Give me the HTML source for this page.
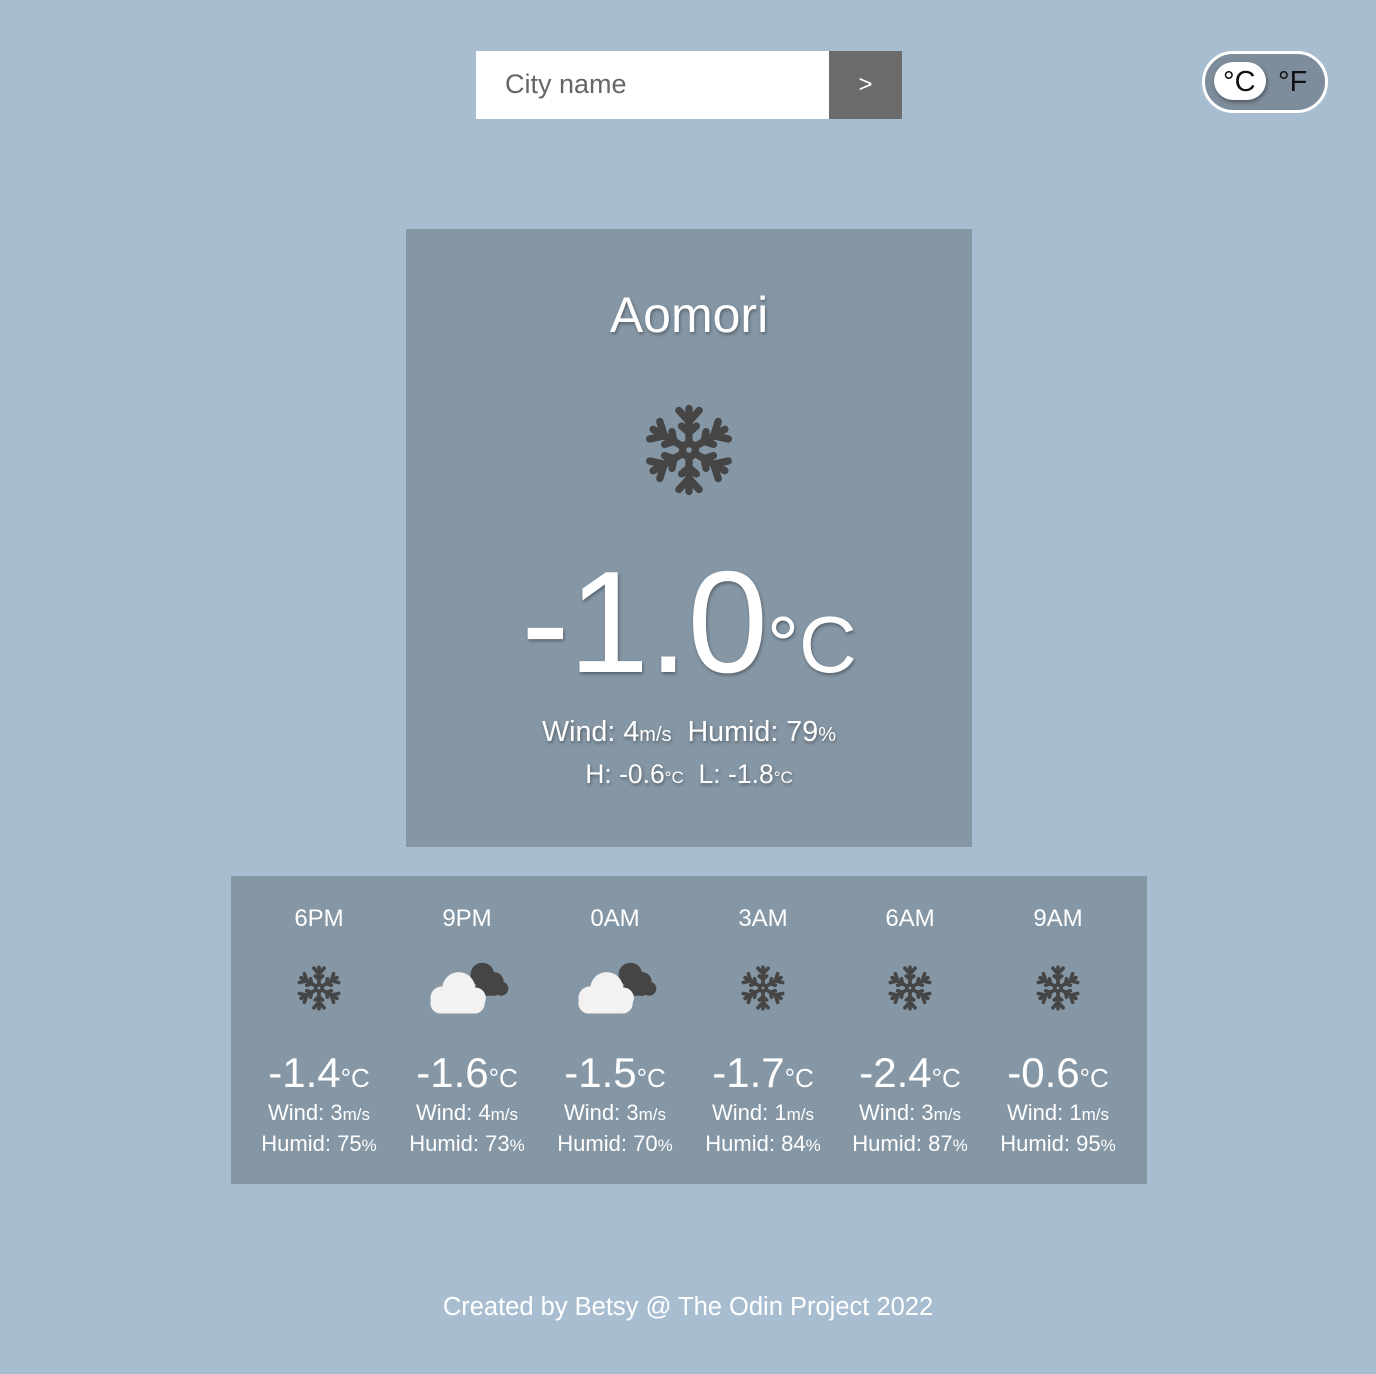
<!DOCTYPE html>
<html><head><meta charset="utf-8"><style>
body{margin:0;width:1376px;height:1374px;background:#a8bed0;font-family:"Liberation Sans",Arial,sans-serif;position:relative;overflow:hidden}
.a{position:absolute}
.sh{text-shadow:1px 2px 3px rgba(0,0,0,.35)}
.w{color:#fff}
.col{position:absolute;width:148px;text-align:center;color:#fff}
</style></head><body>
<svg width="0" height="0" style="position:absolute"><defs>
<g id="arm"><line x1="0" y1="-10" x2="0" y2="-45"/><polyline points="-11,-43 0,-31 11,-43" fill="none"/><polyline points="-8,-26 0,-19 8,-26" fill="none"/></g>
<g id="snow" stroke="#454545" stroke-width="8" stroke-linecap="round" stroke-linejoin="round" fill="none">
<circle r="7"/>
<use href="#arm"/><use href="#arm" transform="rotate(60)"/><use href="#arm" transform="rotate(120)"/><use href="#arm" transform="rotate(180)"/><use href="#arm" transform="rotate(240)"/><use href="#arm" transform="rotate(300)"/>
</g>
<g id="cloud">
<g fill="#454545"><circle cx="20" cy="-6" r="10"/><circle cx="30" cy="0" r="8"/><circle cx="36" cy="6" r="6"/><rect x="14" y="0" width="22" height="12" rx="6"/></g>
<g fill="#f2f2f2"><circle cx="0" cy="6" r="14"/><circle cx="-14" cy="14" r="10"/><circle cx="14" cy="14" r="9"/><rect x="-24" y="10" width="46" height="17" rx="8.5"/></g>
</g>
</defs></svg>

<div class="a" style="left:476px;top:51px;width:353px;height:68px;background:#fff"></div>
<div class="a" style="left:505px;top:69px;font-size:27px;color:#666">City name</div>
<div class="a" style="left:829px;top:51px;width:73px;height:68px;background:#6b6b6b;color:#fff;font-size:24px;text-align:center;line-height:68px">&gt;</div>

<div class="a" style="left:1202px;top:51px;width:120px;height:56px;border:3px solid #fff;border-radius:32px;background:#7e8d9b"></div>
<div class="a" style="left:1214px;top:62px;width:52px;height:38px;border-radius:20px;background:#fff;box-shadow:1px 2px 4px rgba(0,0,0,.4)"></div>
<div class="a" style="left:1223px;top:66px;font-size:29px;color:#111">°C</div>
<div class="a" style="left:1278px;top:66px;font-size:29px;color:#111">°F</div>

<div class="a" style="left:406px;top:229px;width:566px;height:618px;background:#8596a4"></div>
<div class="a w sh" style="left:406px;width:566px;top:286px;text-align:center;font-size:50px">Aomori</div>
<svg class="a" style="left:643px;top:404px" width="92" height="92" viewBox="-50 -50 100 100"><use href="#snow"/></svg>
<div class="a w sh" style="left:406px;width:566px;top:550px;text-align:center;font-size:145px;line-height:145px;letter-spacing:-1px">-1.0<span style="font-size:80px;letter-spacing:0">°C</span></div>
<div class="a w sh" style="left:406px;width:566px;top:716px;text-align:center;font-size:28.7px">Wind: 4<span style="font-size:20px">m/s</span>&nbsp; Humid: 79<span style="font-size:20px">%</span></div>
<div class="a w sh" style="left:406px;width:566px;top:759px;text-align:center;font-size:26.5px">H: -0.6<span style="font-size:17px">°C</span>&nbsp; L: -1.8<span style="font-size:17px">°C</span></div>

<div class="a" style="left:231px;top:876px;width:916px;height:308px;background:#8596a4"></div>

<div class="col" style="left:245px;top:905px;font-size:24px">6PM</div>
<div class="col" style="left:393px;top:905px;font-size:24px">9PM</div>
<div class="col" style="left:541px;top:905px;font-size:24px">0AM</div>
<div class="col" style="left:689px;top:905px;font-size:24px">3AM</div>
<div class="col" style="left:836px;top:905px;font-size:24px">6AM</div>
<div class="col" style="left:984px;top:905px;font-size:24px">9AM</div>

<svg class="a" style="left:296px;top:965px" width="46" height="46" viewBox="-50 -50 100 100"><use href="#snow"/></svg>
<svg class="a" style="left:423px;top:958px" width="88" height="59" viewBox="-26 -20 66 50"><use href="#cloud"/></svg>
<svg class="a" style="left:571px;top:958px" width="88" height="59" viewBox="-26 -20 66 50"><use href="#cloud"/></svg>
<svg class="a" style="left:740px;top:965px" width="46" height="46" viewBox="-50 -50 100 100"><use href="#snow"/></svg>
<svg class="a" style="left:887px;top:965px" width="46" height="46" viewBox="-50 -50 100 100"><use href="#snow"/></svg>
<svg class="a" style="left:1035px;top:965px" width="46" height="46" viewBox="-50 -50 100 100"><use href="#snow"/></svg>

<div class="col" style="left:245px;top:1049px;font-size:42px">-1.4<span style="font-size:26px">°C</span></div>
<div class="col" style="left:393px;top:1049px;font-size:42px">-1.6<span style="font-size:26px">°C</span></div>
<div class="col" style="left:541px;top:1049px;font-size:42px">-1.5<span style="font-size:26px">°C</span></div>
<div class="col" style="left:689px;top:1049px;font-size:42px">-1.7<span style="font-size:26px">°C</span></div>
<div class="col" style="left:836px;top:1049px;font-size:42px">-2.4<span style="font-size:26px">°C</span></div>
<div class="col" style="left:984px;top:1049px;font-size:42px">-0.6<span style="font-size:26px">°C</span></div>

<div class="col" style="left:245px;top:1098px;font-size:22px;line-height:29px">Wind: 3<span style="font-size:17px">m/s</span><br>Humid: 75<span style="font-size:17px">%</span></div>
<div class="col" style="left:393px;top:1098px;font-size:22px;line-height:29px">Wind: 4<span style="font-size:17px">m/s</span><br>Humid: 73<span style="font-size:17px">%</span></div>
<div class="col" style="left:541px;top:1098px;font-size:22px;line-height:29px">Wind: 3<span style="font-size:17px">m/s</span><br>Humid: 70<span style="font-size:17px">%</span></div>
<div class="col" style="left:689px;top:1098px;font-size:22px;line-height:29px">Wind: 1<span style="font-size:17px">m/s</span><br>Humid: 84<span style="font-size:17px">%</span></div>
<div class="col" style="left:836px;top:1098px;font-size:22px;line-height:29px">Wind: 3<span style="font-size:17px">m/s</span><br>Humid: 87<span style="font-size:17px">%</span></div>
<div class="col" style="left:984px;top:1098px;font-size:22px;line-height:29px">Wind: 1<span style="font-size:17px">m/s</span><br>Humid: 95<span style="font-size:17px">%</span></div>

<div class="a w" style="left:0;width:1376px;top:1293px;text-align:center;font-size:25.5px">Created by Betsy @ The Odin Project 2022</div>
</body></html>
